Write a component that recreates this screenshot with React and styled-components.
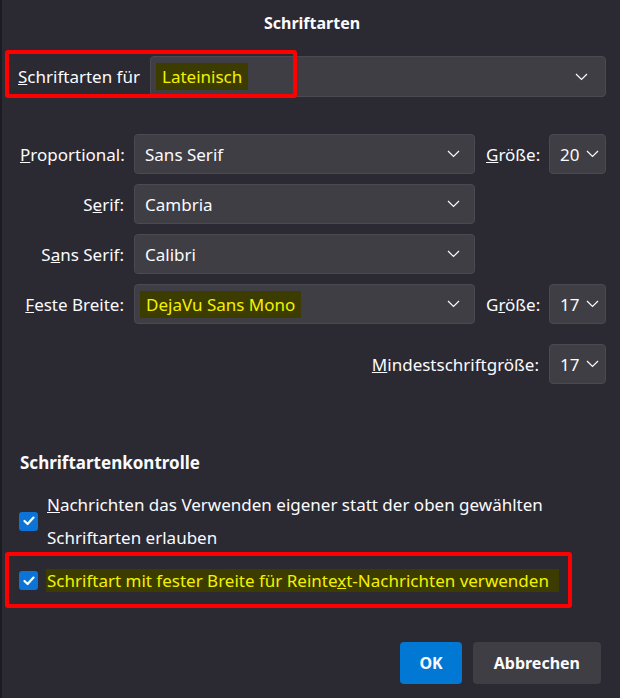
import React from "react"
import styled, { createGlobalStyle } from "styled-components"

const GlobalStyle = createGlobalStyle`
  html, body {
    margin: 0;
    padding: 0;
    background: #2b2a33;
  }
  body {
    font-family: "Noto Sans", "Open Sans", sans-serif;
    color: #fbfbfe;
  }
`

const sizes = { proportional: "20", monospace: "17", minimum: "17" }

const Chevron = () => (
  <svg width="13" height="8" viewBox="0 0 13 8" fill="none">
    <polyline points="1,1 6.5,6.5 12,1" stroke="#fbfbfe" strokeWidth="1.2" />
  </svg>
)

const App = () => {
  return (
    <>
      <GlobalStyle />
      <Dialog>
        <Title>Schriftarten</Title>

        <LangRow>
          <Label><u>S</u>chriftarten für</Label>
          <Select $grow>
            <Marked>Lateinisch</Marked>
            <Chevron />
          </Select>
          <Annotation $w="292px" $h="48px" $left="-13px" $top="-6px" />
        </LangRow>

        <FontGrid>
          <RowLabel><u>P</u>roportional:</RowLabel>
          <Select><span>Sans Serif</span><Chevron /></Select>
          <SizeLabel><u>G</u>röße:</SizeLabel>
          <SizeSelect><span>{sizes.proportional}</span><Chevron /></SizeSelect>

          <RowLabel>S<u>e</u>rif:</RowLabel>
          <Select><span>Cambria</span><Chevron /></Select>
          <Spacer />

          <RowLabel>S<u>a</u>ns Serif:</RowLabel>
          <Select><span>Calibri</span><Chevron /></Select>
          <Spacer />

          <RowLabel><u>F</u>este Breite:</RowLabel>
          <Select><Marked>DejaVu Sans Mono</Marked><Chevron /></Select>
          <SizeLabel>G<u>r</u>öße:</SizeLabel>
          <SizeSelect><span>{sizes.monospace}</span><Chevron /></SizeSelect>

          <MinLabel><u>M</u>indestschriftgröße:</MinLabel>
          <SizeSelect><span>{sizes.minimum}</span><Chevron /></SizeSelect>
        </FontGrid>

        <SectionTitle>Schriftartenkontrolle</SectionTitle>

        <CheckRow>
          <Box><Tick /></Box>
          <CheckText><u>N</u>achrichten das Verwenden eigener statt der oben gewählten Schriftarten erlauben</CheckText>
        </CheckRow>

        <CheckRow $single>
          <Box><Tick /></Box>
          <CheckText><Marked $wide>Schriftart mit fester Breite für Reinte<u>x</u>t-Nachrichten verwenden</Marked></CheckText>
          <Annotation $w="567px" $h="56px" $left="-14px" $top="-12px" />
        </CheckRow>

        <Footer>
          <Button $primary>OK</Button>
          <Button>Abbrechen</Button>
        </Footer>
      </Dialog>
    </>
  )
}

const Tick = () => (
  <svg width="12" height="10" viewBox="0 0 12 10" fill="none">
    <polyline points="1.5,5 4.6,8 10.5,1.6" stroke="#fff" strokeWidth="2.2" strokeLinecap="round" strokeLinejoin="round" />
  </svg>
)

const Dialog = styled.div`
  box-sizing: border-box;
  width: 620px;
  height: 698px;
  border-left: 2px solid #1c1b22;
  padding: 0 14px 14px 16px;
  display: flex;
  flex-direction: column;
  font-size: 17px;
`

const Title = styled.h1`
  margin: 0;
  height: 46px;
  display: flex;
  align-items: center;
  justify-content: center;
  font-size: 16px;
  font-weight: 700;
`

const LangRow = styled.div`
  position: relative;
  display: flex;
  align-items: center;
  gap: 10px;
  margin-top: 10px;
`

const Label = styled.span`
  white-space: nowrap;
`

const Select = styled.div`
  box-sizing: border-box;
  height: ${p => (p.$grow ? "41px" : "40px")};
  ${p => p.$grow && "flex: 1;"}
  background: #3f3e45;
  border: 1px solid #4b4a52;
  border-radius: 4px;
  padding: 0 ${p => (p.$grow ? "17px" : "14px")} 0 10px;
  display: flex;
  align-items: center;
  justify-content: space-between;
  white-space: nowrap;
`

const Marked = styled.span`
  background: #3d3c00;
  color: #f2f200;
  padding: 0 ${p => (p.$wide ? "10px" : "6px")} 0 ${p => (p.$wide ? "1px" : "6px")};
  margin-left: ${p => (p.$wide ? "-1px" : "-5px")};
  line-height: 27px;
`

const Annotation = styled.div`
  position: absolute;
  left: ${p => p.$left};
  top: ${p => p.$top};
  width: ${p => p.$w};
  height: ${p => p.$h};
  box-sizing: border-box;
  border: 4px solid #ff0000;
  border-radius: 3px;
  pointer-events: none;
`

const FontGrid = styled.div`
  display: grid;
  grid-template-columns: 104px 341px 54px 57px;
  column-gap: 10px;
  row-gap: 10px;
  align-items: center;
  margin-top: 37px;
  margin-left: 2px;
  & > *:nth-last-child(2),
  & > *:last-child {
    margin-top: 10px;
  }
`

const RowLabel = styled.span`
  text-align: right;
  white-space: nowrap;
`

const SizeLabel = styled.span`
  white-space: nowrap;
  padding-left: 1px;
`

const Spacer = styled.span`
  grid-column: span 2;
`

const MinLabel = styled.span`
  grid-column: 1 / 4;
  text-align: right;
  white-space: nowrap;
`

const SizeSelect = styled(Select)`
  padding: 0 6px 0 10px;
`

const SectionTitle = styled.h2`
  margin: 67px 0 0 2px;
  font-size: 17px;
  font-weight: 700;
`

const CheckRow = styled.label`
  position: relative;
  display: flex;
  align-items: center;
  gap: 9px;
  margin: ${p => (p.$single ? "10px 0 0 1px" : "14px 0 0 1px")};
  line-height: 33px;
`

const Box = styled.span`
  flex: none;
  width: 19px;
  height: 19px;
  border-radius: 3px;
  background: #0b74d6;
  display: flex;
  align-items: center;
  justify-content: center;
`

const CheckText = styled.span`
  max-width: 530px;
`

const Footer = styled.div`
  margin-top: auto;
  display: flex;
  justify-content: flex-end;
  gap: 11px;
  padding-right: 5px;
`

const Button = styled.button`
  height: 42px;
  padding: 0 ${p => (p.$primary ? "19px" : "21px")};
  border: none;
  border-radius: 4px;
  font-family: inherit;
  font-size: 16px;
  font-weight: 700;
  color: #fbfbfe;
  background: ${p => (p.$primary ? "#0078d4" : "#3f3e45")};
`

export default App
